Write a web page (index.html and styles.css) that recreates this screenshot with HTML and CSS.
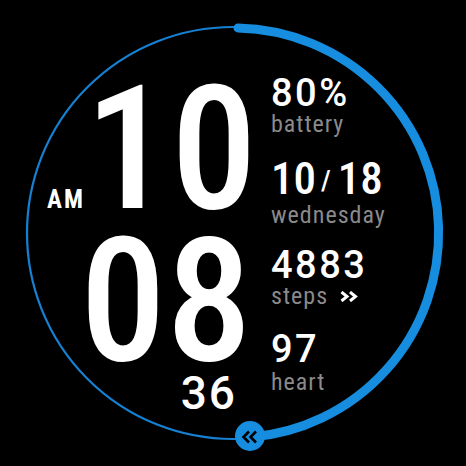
FILE: index.html
```html
<!DOCTYPE html>
<html>
<head>
<meta charset="utf-8">
<link rel="stylesheet" href="styles.css">
</head>
<body>
<div class="watch">
  <svg class="ring" viewBox="0 0 466 466" width="466" height="466">
    <circle cx="233" cy="233" r="206" fill="none" stroke="#1680d2" stroke-width="2.2"/>
    <path d="M 238 28 A 205 205 0 0 1 250 437.3" fill="none" stroke="#168ddf" stroke-width="9" stroke-linecap="round"/>
    <circle cx="250" cy="436" r="15" fill="#168ddf"/>
    <path d="M249 431.5 L243.5 437 L249 442.5 M256 431.5 L250.5 437 L256 442.5" fill="none" stroke="#000" stroke-width="2.6"/>
  </svg>
  <div class="face">
    <div class="time">
      <div class="row-hour">
        <span class="ampm">AM</span>
        <span class="big">10</span>
      </div>
      <div class="big min">08</div>
      <div class="sec">36</div>
    </div>
    <div class="stats">
      <div class="stat">
        <div class="val">80%</div>
        <div class="lbl">battery</div>
      </div>
      <div class="stat">
        <div class="val date">10<span class="slash">/</span>18</div>
        <div class="lbl">wednesday</div>
      </div>
      <div class="stat stat-steps">
        <div class="val">4883</div>
        <div class="lbl">steps<svg class="more" viewBox="0 0 18 11" width="18" height="11"><path d="M1.5 1 L7 5.5 L1.5 10 M10 1 L15.5 5.5 L10 10" fill="none" stroke="#fff" stroke-width="3"/></svg></div>
      </div>
      <div class="stat stat-heart">
        <div class="val">97</div>
        <div class="lbl">heart</div>
      </div>
    </div>
  </div>
</div>
</body>
</html>
```
FILE: styles.css
```css
html, body {
  margin: 0;
  padding: 0;
  background: #000;
}

.watch {
  position: relative;
  width: 466px;
  height: 466px;
  overflow: hidden;
  background: #000;
  font-family: "Roboto Condensed", "Roboto", sans-serif;
  font-stretch: condensed;
  color: #fff;
}

.ring {
  position: absolute;
  left: 0;
  top: 0;
}

.face {
  position: relative;
  display: flex;
  align-items: flex-start;
}

.time {
  width: 252px;
  padding-left: 47px;
  padding-top: 74px;
  box-sizing: border-box;
  display: flex;
  flex-direction: column;
  align-items: stretch;
}

.row-hour {
  display: flex;
  justify-content: space-between;
  align-items: baseline;
  line-height: 150px;
}

.ampm {
  font-size: 25px;
  font-weight: 700;
  letter-spacing: 2px;
  line-height: 30px;
}

.big {
  font-size: 172px;
  font-weight: 500;
  line-height: 150px;
}

.min {
  text-align: right;
  line-height: 140px;
  margin-top: 7px;
}

.sec {
  text-align: right;
  font-family: "Roboto", sans-serif;
  font-stretch: normal;
  font-size: 46px;
  font-weight: 500;
  letter-spacing: 2px;
  line-height: 40px;
  margin-top: 2px;
  padding-right: 15px;
}

.stats {
  margin-left: 19px;
  padding-top: 78px;
  display: flex;
  flex-direction: column;
  gap: 23px;
}

.stat-steps {
  margin-top: -2px;
}

.stat-heart {
  margin-top: 1px;
}

.val {
  font-family: "Roboto", sans-serif;
  font-stretch: normal;
  font-size: 38px;
  font-weight: 500;
  letter-spacing: 2.5px;
  line-height: 30px;
}

.val.date {
  font-family: "Roboto Condensed", "Roboto", sans-serif;
  font-stretch: condensed;
  letter-spacing: 0;
  font-size: 45px;
  line-height: 36px;
}

.slash {
  font-size: 28px;
  margin: 0 7px 0 5px;
  vertical-align: 4px;
}

.lbl {
  font-size: 24px;
  line-height: 28px;
  margin-top: 2px;
  color: #8a8a8a;
  letter-spacing: 1px;
  display: flex;
  align-items: center;
}

.stat-heart .lbl {
  margin-top: 4px;
}

.more {
  margin-left: 12px;
  margin-top: 1px;
}
```
